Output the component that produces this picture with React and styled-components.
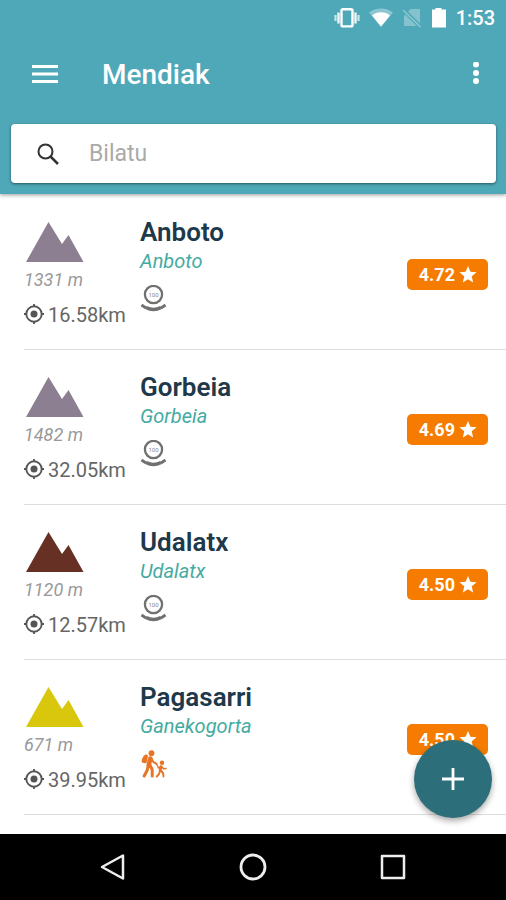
import React, { useState } from 'react';
import styled, { createGlobalStyle } from 'styled-components';

const mountains = [
  { id: 1, name: 'Anboto', range: 'Anboto', height: 1331, distance: '16.58', rating: '4.72', color: '#8c7f91', type: 'summit' },
  { id: 2, name: 'Gorbeia', range: 'Gorbeia', height: 1482, distance: '32.05', rating: '4.69', color: '#8c7f91', type: 'summit' },
  { id: 3, name: 'Udalatx', range: 'Udalatx', height: 1120, distance: '12.57', rating: '4.50', color: '#663025', type: 'summit' },
  { id: 4, name: 'Pagasarri', range: 'Ganekogorta', height: 671, distance: '39.95', rating: '4.50', color: '#d8c70c', type: 'family' },
];

const StatusIcons = () => (
  <>
    <svg width="26" height="20" viewBox="0 0 26 20" fill="none" stroke="#fff">
      <rect x="7.5" y="1.2" width="11" height="17.2" rx="1.5" strokeWidth="2.4" />
      <path d="M4.5 4.500v11M21.500 4.500v11" strokeWidth="2.400" opacity="0.9" />
      <path d="M1.500 7v6M24.500 7v6" strokeWidth="2.200" opacity="0.7" />
    </svg>
    <svg width="24" height="20" viewBox="0 0 24 20" fill="#fff">
      <path d="M0 4.5C7-1 17-1 24 4.5L12 19z" opacity="0.35" />
      <path d="M3 7.500C8 3.200 16 3.200 21 7.500L12 18.500z" />
    </svg>
    <svg width="20" height="20" viewBox="0 0 20 20">
      <path d="M8.5 1H18v17H2V8z" fill="#fff" opacity="0.3" />
      <path d="M1 1.5l17 17" stroke="#4fa8b8" strokeWidth="4" />
      <path d="M1 2l17.500 17" stroke="#8fc8d2" strokeWidth="1.500" />
    </svg>
    <svg width="16" height="20" viewBox="0 0 16 20" fill="#fff">
      <path d="M4.500 0h6v1.500h4.500v18h-14V1.500h3.500z" />
    </svg>
  </>
);

const MountainIcon = ({ color }) => (
  <svg width="58" height="40" viewBox="0 0 58 40">
    <path d="M0 40L22.500 0L36 22L42.500 13L57.500 40z" fill={color} />
  </svg>
);

const TargetIcon = () => (
  <svg width="20" height="24" viewBox="0 0 20 24" fill="none" stroke="#555">
    <circle cx="10" cy="11" r="7.700" strokeWidth="1.900" />
    <path d="M10 1v3M10 18v3M0 11h3M17 11h3" strokeWidth="1.800" />
    <circle cx="10" cy="11" r="3.500" fill="#555" stroke="none" />
  </svg>
);

const SummitIcon = () => (
  <svg width="28" height="28" viewBox="0 0 28 28" fill="none" stroke="#707070">
    <circle cx="13.500" cy="9.500" r="8.600" strokeWidth="2.300" />
    <text x="13.500" y="11.500" textAnchor="middle" fontSize="6" fontFamily="Roboto, sans-serif" fill="#888" stroke="none">100</text>
    <path d="M6 22.500q7.500 4 15 0" strokeWidth="3.500" />
    <path d="M1.500 20l4.500 3M25.500 20l-4.500 3" strokeWidth="2.800" />
  </svg>
);

const FamilyIcon = () => (
  <svg width="28" height="28" viewBox="0 0 28 28" fill="none" stroke="#e87424" strokeLinecap="round" strokeLinejoin="round">
    <circle cx="11.500" cy="3.200" r="2.900" fill="#e87424" stroke="none" />
    <path d="M5.500 4.500Q7.500 4 8 6L6.500 13Q3 13.500 1.500 12Q2 6.500 5.500 4.500z" fill="#e87424" stroke="none" />
    <path d="M10.300 8.500L8.800 15" strokeWidth="4.600" />
    <path d="M8.200 15.500L7.300 20L4.200 26M9.800 15L12.200 19.500V26" strokeWidth="3" />
    <path d="M11.300 8.500L13.200 11.800L16.500 13.800" strokeWidth="2" />
    <circle cx="22" cy="12.700" r="2.200" fill="#e87424" stroke="none" />
    <path d="M21 16.800L20.200 20.500" strokeWidth="3" />
    <path d="M20 21L19 24L16.800 26.500M20.800 20.500L23 23L23.500 26.500" strokeWidth="1.900" />
    <path d="M20.500 16.500L18.500 18L16.500 14M22 17L23.500 18.800L26 18.500" strokeWidth="1.400" />
  </svg>
);

const StarIcon = () => (
  <svg width="18" height="18" viewBox="0 0 24 24" fill="#fff">
    <path d="M12 17.500L18.800 22l-1.800-8.300L23.500 8.300l-8.300-.7L12 0 8.800 7.600 .5 8.300l6.500 5.400L5.200 22z" />
  </svg>
);

const MountainRow = ({ mountain }) => (
  <Row>
    <Stats>
      <MountainIcon color={mountain.color} />
      <Height>{mountain.height} m</Height>
      <Distance>
        <TargetIcon />
        {mountain.distance}km
      </Distance>
    </Stats>
    <Info>
      <Name>{mountain.name}</Name>
      <Range>{mountain.range}</Range>
      {mountain.type === 'family' ? <FamilyIcon /> : <SummitIcon />}
    </Info>
    <Rating>
      {mountain.rating}
      <StarIcon />
    </Rating>
  </Row>
);

const App = () => {
  const [search, setSearch] = useState('');

  const visible = mountains.filter((m) =>
    m.name.toLowerCase().includes(search.toLowerCase())
  );

  return (
    <Screen>
      <GlobalStyle />
      <Header>
        <StatusBar>
          <StatusIcons />
          <Time>1:53</Time>
        </StatusBar>
        <Toolbar>
          <IconButton aria-label="Menua">
            <svg width="28" height="20" viewBox="0 0 28 20" stroke="#fff" strokeWidth="2.800">
              <path d="M1 2.500h26M1 10h26M1 17.500h26" />
            </svg>
          </IconButton>
          <Title>Mendiak</Title>
          <IconButton aria-label="Aukerak">
            <svg width="8" height="24" viewBox="0 0 8 24" fill="#fff">
              <circle cx="4" cy="2.500" r="3" />
              <circle cx="4" cy="11" r="3" />
              <circle cx="4" cy="19" r="3" />
            </svg>
          </IconButton>
        </Toolbar>
        <SearchBox>
          <svg width="22" height="22" viewBox="0 0 22 22" fill="none" stroke="#333">
            <circle cx="8.500" cy="8.500" r="7" strokeWidth="2" />
            <path d="M13.500 13.500l7.500 7.500" strokeWidth="2.500" />
          </svg>
          <SearchInput
            type="text"
            aria-label="Bilatu"
            placeholder="Bilatu"
            value={search}
            onChange={(e) => setSearch(e.target.value)}
          />
        </SearchBox>
      </Header>

      <Content>
        <List>
          {visible.map((m) => (
            <MountainRow key={m.id} mountain={m} />
          ))}
        </List>
        <AddButton aria-label="Gehitu">
          <svg width="22" height="22" viewBox="0 0 22 22" stroke="#fff" strokeWidth="2.800">
            <path d="M11 0v22M0 11h22" />
          </svg>
        </AddButton>
      </Content>

      <NavBar>
        <IconButton aria-label="Atzera">
          <svg width="28" height="28" viewBox="0 0 28 28" fill="none" stroke="#eee" strokeWidth="2.500" strokeLinejoin="round">
            <path d="M3 14L24 2.500v23z" />
          </svg>
        </IconButton>
        <IconButton aria-label="Hasiera">
          <svg width="28" height="28" viewBox="0 0 28 28" fill="none" stroke="#eee" strokeWidth="2.800">
            <circle cx="14" cy="14" r="12" />
          </svg>
        </IconButton>
        <IconButton aria-label="Azkenak">
          <svg width="28" height="28" viewBox="0 0 28 28" fill="none" stroke="#eee" strokeWidth="2.500" strokeLinejoin="round">
            <rect x="3" y="3" width="22" height="22" />
          </svg>
        </IconButton>
      </NavBar>
    </Screen>
  );
};

export default App;

// Styled Components

const GlobalStyle = createGlobalStyle`
  * {
    box-sizing: border-box;
  }

  body {
    margin: 0;
    font-family: Roboto, "Noto Sans", sans-serif;
    background-color: #fff;
  }

  svg {
    display: block;
    flex-shrink: 0;
  }
`;

const Screen = styled.div`
  display: flex;
  flex-direction: column;
  height: 100vh;
`;

const Header = styled.header`
  position: relative;
  z-index: 1;
  padding-bottom: 11px;
  background-color: #4fa8b8;
  box-shadow: 0 1px 4px rgba(0, 0, 0, 0.4);
`;

const StatusBar = styled.div`
  display: flex;
  align-items: center;
  justify-content: flex-end;
  gap: 9px;
  height: 36px;
  padding: 0 11px;
`;

const Time = styled.span`
  font-size: 20px;
  font-weight: 500;
  color: #fff;
`;

const Toolbar = styled.div`
  display: flex;
  align-items: center;
  height: 76px;
  padding: 0 26px 0 31px;
`;

const IconButton = styled.button`
  display: flex;
  padding: 0;
  border: none;
  background: none;
  cursor: pointer;
`;

const Title = styled.h1`
  flex: 1;
  margin: 0 0 0 43px;
  font-size: 28px;
  font-weight: 500;
  color: #fff;
`;

const SearchBox = styled.div`
  display: flex;
  align-items: center;
  gap: 30px;
  height: 59px;
  margin: 12px 10px 0 11px;
  padding: 0 26px;
  background-color: #fff;
  border-radius: 4px;
  box-shadow: 0 1px 3px rgba(0, 0, 0, 0.5);
`;

const SearchInput = styled.input`
  flex: 1;
  min-width: 0;
  padding: 0;
  border: none;
  outline: none;
  font-family: inherit;
  font-size: 23px;
  color: #333;

  &::placeholder {
    color: #aaa;
  }
`;

const Content = styled.main`
  position: relative;
  flex: 1;
  min-height: 0;
`;

const List = styled.ul`
  height: 100%;
  margin: 0;
  padding: 1px 0 0 24px;
  overflow-y: auto;
  list-style: none;
`;

const Row = styled.li`
  display: grid;
  grid-template-columns: 116px 1fr auto;
  min-height: 155px;
  padding-right: 18px;
  border-bottom: 1px solid #ddd;
`;

const Stats = styled.div`
  padding-top: 27px;

  > svg {
    margin-left: 2px;
  }
`;

const Height = styled.div`
  margin-top: 6px;
  font-size: 18px;
  font-style: italic;
  line-height: 24px;
  color: #999;
`;

const Distance = styled.div`
  display: flex;
  align-items: center;
  gap: 4px;
  margin-top: 11px;
  font-size: 20px;
  line-height: 24px;
  color: #666;
`;

const Info = styled.div`
  padding-top: 22px;
`;

const Name = styled.h2`
  margin: 0;
  font-size: 26px;
  font-weight: 600;
  line-height: 30px;
  color: #20394a;
`;

const Range = styled.div`
  margin-bottom: 10px;
  font-size: 20px;
  font-style: italic;
  line-height: 28px;
  color: #45aaa2;
`;

const Rating = styled.div`
  display: flex;
  align-items: center;
  align-self: start;
  gap: 4px;
  height: 31px;
  margin-top: 64px;
  padding: 0 11px 0 12px;
  border-radius: 5px;
  background-color: #f57c00;
  font-size: 18px;
  font-weight: 700;
  color: #fff;
`;

const AddButton = styled.button`
  position: absolute;
  right: 14px;
  bottom: 16px;
  display: flex;
  align-items: center;
  justify-content: center;
  width: 78px;
  height: 78px;
  border: none;
  border-radius: 50%;
  background-color: #2c6e79;
  box-shadow: 0 3px 6px rgba(0, 0, 0, 0.35);
  cursor: pointer;
`;

const NavBar = styled.nav`
  display: flex;
  align-items: center;
  justify-content: center;
  gap: 112px;
  height: 66px;
  background-color: #000;
`;
